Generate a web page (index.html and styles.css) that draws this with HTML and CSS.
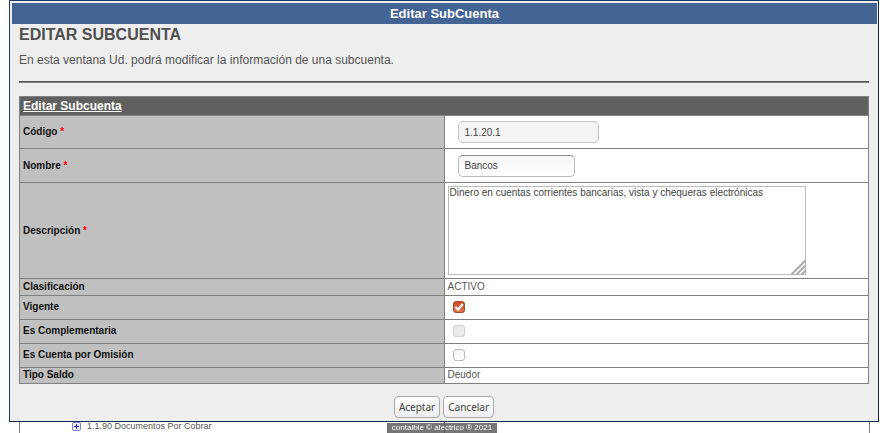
FILE: index.html
```html
<!DOCTYPE html>
<html lang="es">
<head>
<meta charset="utf-8">
<title>Editar SubCuenta</title>
<link rel="stylesheet" href="styles.css">
</head>
<body>
<form class="dialog">
  <div class="dialog-title">Editar SubCuenta</div>
  <div class="dialog-body">
    <h1>EDITAR SUBCUENTA</h1>
    <p class="intro">En esta ventana Ud. podrá modificar la información de una subcuenta.</p>
    <hr>
    <table class="fields">
      <thead>
        <tr><th colspan="2" scope="colgroup">Editar Subcuenta</th></tr>
      </thead>
      <tbody>
        <tr class="row-code">
          <th scope="row"><label for="codigo">Código <span class="req">*</span></label></th>
          <td><input class="text code" id="codigo" type="text" value="1.1.20.1" readonly></td>
        </tr>
        <tr class="row-name">
          <th scope="row"><label for="nombre">Nombre <span class="req">*</span></label></th>
          <td><input class="text name" id="nombre" type="text" value="Bancos"></td>
        </tr>
        <tr class="row-area">
          <th scope="row"><label for="descripcion">Descripción <span class="req">*</span></label></th>
          <td>
            <div class="area">
              <textarea id="descripcion">Dinero en cuentas corrientes bancarias, vista y chequeras electrónicas</textarea>
              <svg class="grip" viewBox="0 0 15 15" aria-hidden="true"><path d="M0.5 14.5 L14.5 0.5 M5.5 14.5 L14.5 5.5 M10.5 14.5 L14.5 10.5"/></svg>
            </div>
          </td>
        </tr>
        <tr class="row-plain">
          <th scope="row">Clasificación</th>
          <td>ACTIVO</td>
        </tr>
        <tr class="row-check">
          <th scope="row"><label for="vigente">Vigente</label></th>
          <td>
            <span class="check">
              <input id="vigente" type="checkbox" checked>
              <svg class="tick" viewBox="0 0 12 12" aria-hidden="true"><path d="M2.5 6 L5 8.7 L9.7 3"/></svg>
            </span>
          </td>
        </tr>
        <tr class="row-check">
          <th scope="row"><label for="complementaria">Es Complementaria</label></th>
          <td><span class="check"><input id="complementaria" type="checkbox" disabled></span></td>
        </tr>
        <tr class="row-check">
          <th scope="row"><label for="omision">Es Cuenta por Omisión</label></th>
          <td><span class="check"><input id="omision" type="checkbox"></span></td>
        </tr>
        <tr class="row-last">
          <th scope="row">Tipo Saldo</th>
          <td>Deudor</td>
        </tr>
      </tbody>
    </table>
    <div class="actions">
      <button type="button">Aceptar</button>
      <button type="button">Cancelar</button>
    </div>
  </div>
</form>
<main class="accounts">
  <div class="account">
    <svg class="expand" viewBox="0 0 9 9" aria-hidden="true"><rect x="0.5" y="0.5" width="8" height="8" rx="1.5"/><path d="M2 4.5h5M4.5 2v5"/></svg>
    <span>1.1.90 Documentos Por Cobrar</span>
  </div>
  <div class="account-detail"></div>
</main>
<footer class="credit">contaible © alectrico ® 2021</footer>
</body>
</html>
```
FILE: styles.css
```css
* {
  box-sizing: border-box;
}

body {
  margin: 0;
  overflow: hidden;
  background: #fff;
  color: #555;
  font-family: "Liberation Sans", Arial, sans-serif;
  font-size: 10px;
}

.dialog {
  margin: 0 5px 0 9px;
  padding: 2px 1px 0 2px;
  border: 1px solid #1f3a68;
  border-right-color: #14294a;
  border-bottom-color: #14294a;
  background: #eee;
}

.dialog-title {
  background: #446496;
  color: #fff;
  font-size: 13px;
  font-weight: bold;
  line-height: 21px;
  text-align: center;
}

.dialog-body {
  padding: 0 8px 3px 7px;
}

h1 {
  margin: 0;
  color: #4f4f4f;
  font-size: 16px;
  line-height: 22px;
}

.intro {
  margin: 7px 0 14px;
  font-size: 12px;
  line-height: 14px;
}

hr {
  height: 2px;
  margin: 0 0 13px;
  border: 0;
  border-top: 1px solid #555;
  border-bottom: 1px solid #808080;
}

.fields {
  width: 100%;
  table-layout: fixed;
  border-collapse: collapse;
}

.fields th,
.fields td {
  padding: 0 3px;
  border: 1px solid #808080;
  text-align: left;
  line-height: 12px;
}

.fields td {
  background: #fff;
}

.fields tbody th {
  background: #c0c0c0;
  color: #111;
}

.fields thead th {
  height: 19px;
  background: #606060;
  color: #fff;
  font-size: 12px;
  text-decoration: underline;
}

.row-code {
  height: 33px;
}

.row-name {
  height: 34px;
}

.row-area {
  height: 96px;
}

.row-plain {
  height: 17px;
}

.row-check {
  height: 24px;
}

.fields .row-check th,
.fields .row-check td,
.fields .row-last th,
.fields .row-last td {
  padding-bottom: 1px;
}

.row-last {
  height: 16px;
}

.req {
  color: #f00;
}

.text {
  display: block;
  height: 22px;
  margin: 0 0 0 10px;
  padding: 0 6px;
  border: 1px solid #bbb;
  border-radius: 5px;
  background: linear-gradient(#f6f6f6, #fff);
  color: #444;
  font: 10px "Liberation Sans", Arial, sans-serif;
}

.code {
  width: 141px;
  border-color: #c6c6c6;
  background: #f4f4f4;
}

.name {
  width: 117px;
  border-top-color: #8c8c8c;
}

.area {
  position: relative;
  width: 358px;
}

.area textarea {
  display: block;
  width: 100%;
  height: 89px;
  padding: 0 1px;
  border: 1px solid #bbb;
  background: #fff;
  color: #444;
  font: 10px/12px "Liberation Sans", Arial, sans-serif;
  resize: none;
}

.grip {
  position: absolute;
  right: 0;
  bottom: 0;
  width: 15px;
  height: 15px;
  fill: none;
  stroke: #aaa;
  stroke-width: 2;
}

.check {
  position: relative;
  display: block;
  width: 12px;
  height: 12px;
  margin-left: 5px;
}

.check input {
  display: block;
  appearance: none;
  width: 12px;
  height: 12px;
  margin: 0;
  border: 1px solid #bbb;
  border-radius: 3px;
  background: linear-gradient(#f2f2f2, #fff);
}

.check input:checked {
  border-color: #a8492a;
  background: linear-gradient(#cf4f25, #e07349);
}

.check input:disabled {
  border-color: #d2d2d2;
  background: #ebebeb;
}

.tick {
  position: absolute;
  inset: 0;
  fill: none;
  stroke: #fff;
  stroke-width: 2;
  pointer-events: none;
}

.actions {
  display: flex;
  justify-content: center;
  gap: 3px;
  margin-top: 12px;
}

.actions button {
  height: 22px;
  padding: 0 4px;
  border: 1px solid #aaa;
  border-radius: 4px;
  background: linear-gradient(#fff, #ededed);
  color: #444;
  font: 10px "Noto Sans", "Open Sans", sans-serif;
}

.accounts {
  display: grid;
  grid-template-columns: 1fr 1fr;
  height: 11px;
  margin: 0 14px 0 19px;
  border: solid #808080;
  border-width: 0 1px;
}

.account {
  display: flex;
  align-items: center;
  gap: 6px;
  padding: 0 0 2px 52px;
  border-right: 1px solid #555;
  font-size: 9px;
  line-height: 9px;
}

.expand {
  width: 9px;
  height: 9px;
  fill: #eef;
  stroke: #8080d8;
}

.expand path {
  stroke: #2020c0;
}

.credit {
  position: fixed;
  bottom: 0;
  left: 50%;
  width: 110px;
  margin-left: -55px;
  background: rgba(90, 90, 90, 0.83);
  color: #fff;
  font-size: 8px;
  line-height: 10px;
  text-align: center;
}
```
